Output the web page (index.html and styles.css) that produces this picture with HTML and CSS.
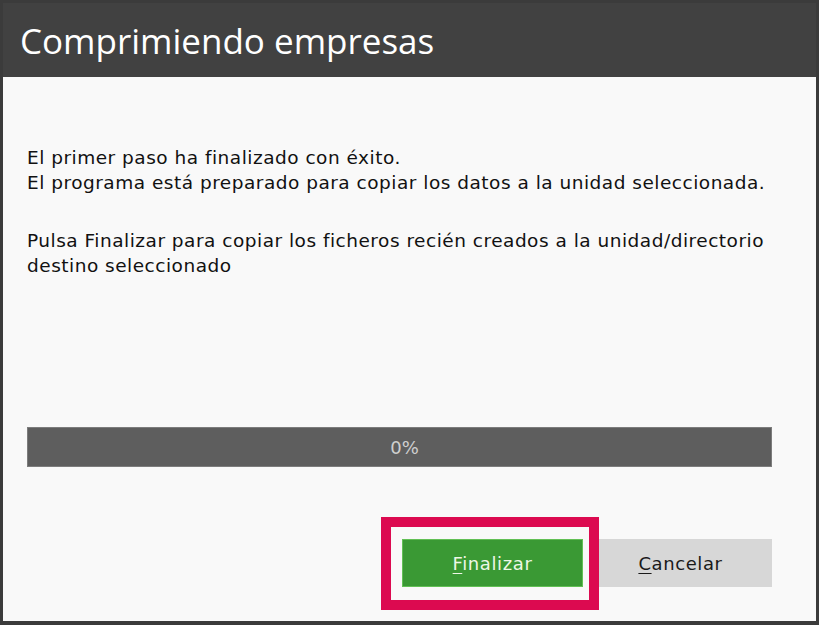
FILE: index.html
```html
<!DOCTYPE html>
<html lang="es">
<head>
<meta charset="utf-8">
<title>Comprimiendo empresas</title>
<link rel="stylesheet" href="styles.css">
</head>
<body>
<div class="dialog">
  <div class="header">
    <h1 class="title">Comprimiendo empresas</h1>
  </div>
  <div class="content">
    <div class="message">
      <p class="para">El primer paso ha finalizado con éxito.<br>El programa está preparado para copiar los datos a la unidad seleccionada.</p>
      <p class="para">Pulsa Finalizar para copiar los ficheros recién creados a la unidad/directorio<br>destino seleccionado</p>
    </div>
    <div class="progress"><span class="progress-label">0%</span></div>
    <div class="actions">
      <button class="btn btn-primary" type="button"><u>F</u>inalizar</button>
      <button class="btn btn-secondary" type="button"><u>C</u>ancelar</button>
      <div class="highlight"></div>
    </div>
  </div>
</div>
</body>
</html>
```
FILE: styles.css
```css
html, body {
  margin: 0;
  padding: 0;
  background: #f9f9f9;
}
.dialog {
  box-sizing: border-box;
  width: 819px;
  height: 625px;
  border: 3px solid #3b3b3b;
  border-bottom-width: 4px;
  display: flex;
  flex-direction: column;
  background: #f9f9f9;
}
.header {
  height: 74px;
  background: #414141;
  display: flex;
  align-items: center;
  padding-left: 17px;
}
.title {
  margin: 0;
  color: #ffffff;
  font-family: "Open Sans", "Noto Sans", sans-serif;
  font-weight: 400;
  font-size: 35px;
  line-height: 1;
  padding-top: 1px;
}
.content {
  flex: 1;
  padding: 0 44px 0 24px;
  display: flex;
  flex-direction: column;
  font-family: "DejaVu Sans", Verdana, sans-serif;
}
.message {
  padding-top: 68px;
  height: 283px;
  box-sizing: border-box;
}
.para {
  margin: 0 0 33px 0;
  font-size: 18.5px;
  letter-spacing: 0.5px;
  line-height: 25px;
  color: #111111;
  white-space: nowrap;
}
.progress {
  height: 40px;
  box-sizing: border-box;
  border: 1px solid #7d7d7d;
  background: #5e5e5e;
  display: flex;
  align-items: center;
  justify-content: center;
  margin-top: 67px;
}
.progress-label {
  color: #cfcfcf;
  font-size: 18px;
  padding-left: 10px;
}
.actions {
  position: relative;
  margin-top: 72px;
  display: flex;
  justify-content: flex-end;
  gap: 6px;
}
.btn {
  height: 48px;
  border: 1px solid transparent;
  font-family: "DejaVu Sans", Verdana, sans-serif;
  font-size: 18px;
  letter-spacing: 0.6px;
  padding: 0;
  margin: 0;
}
.btn u {
  text-underline-offset: 3px;
}
.btn-primary {
  width: 181px;
  background: #3a9934;
  border-color: #62c055;
  color: #eef7e6;
}
.btn-secondary {
  width: 183px;
  background: #d7d7d7;
  border-color: #d7d7d7;
  color: #1a1a1a;
}
.highlight {
  position: absolute;
  left: 354px;
  top: -22px;
  width: 218px;
  height: 93px;
  box-sizing: border-box;
  border: 10px solid #dc0a50;
}
```
